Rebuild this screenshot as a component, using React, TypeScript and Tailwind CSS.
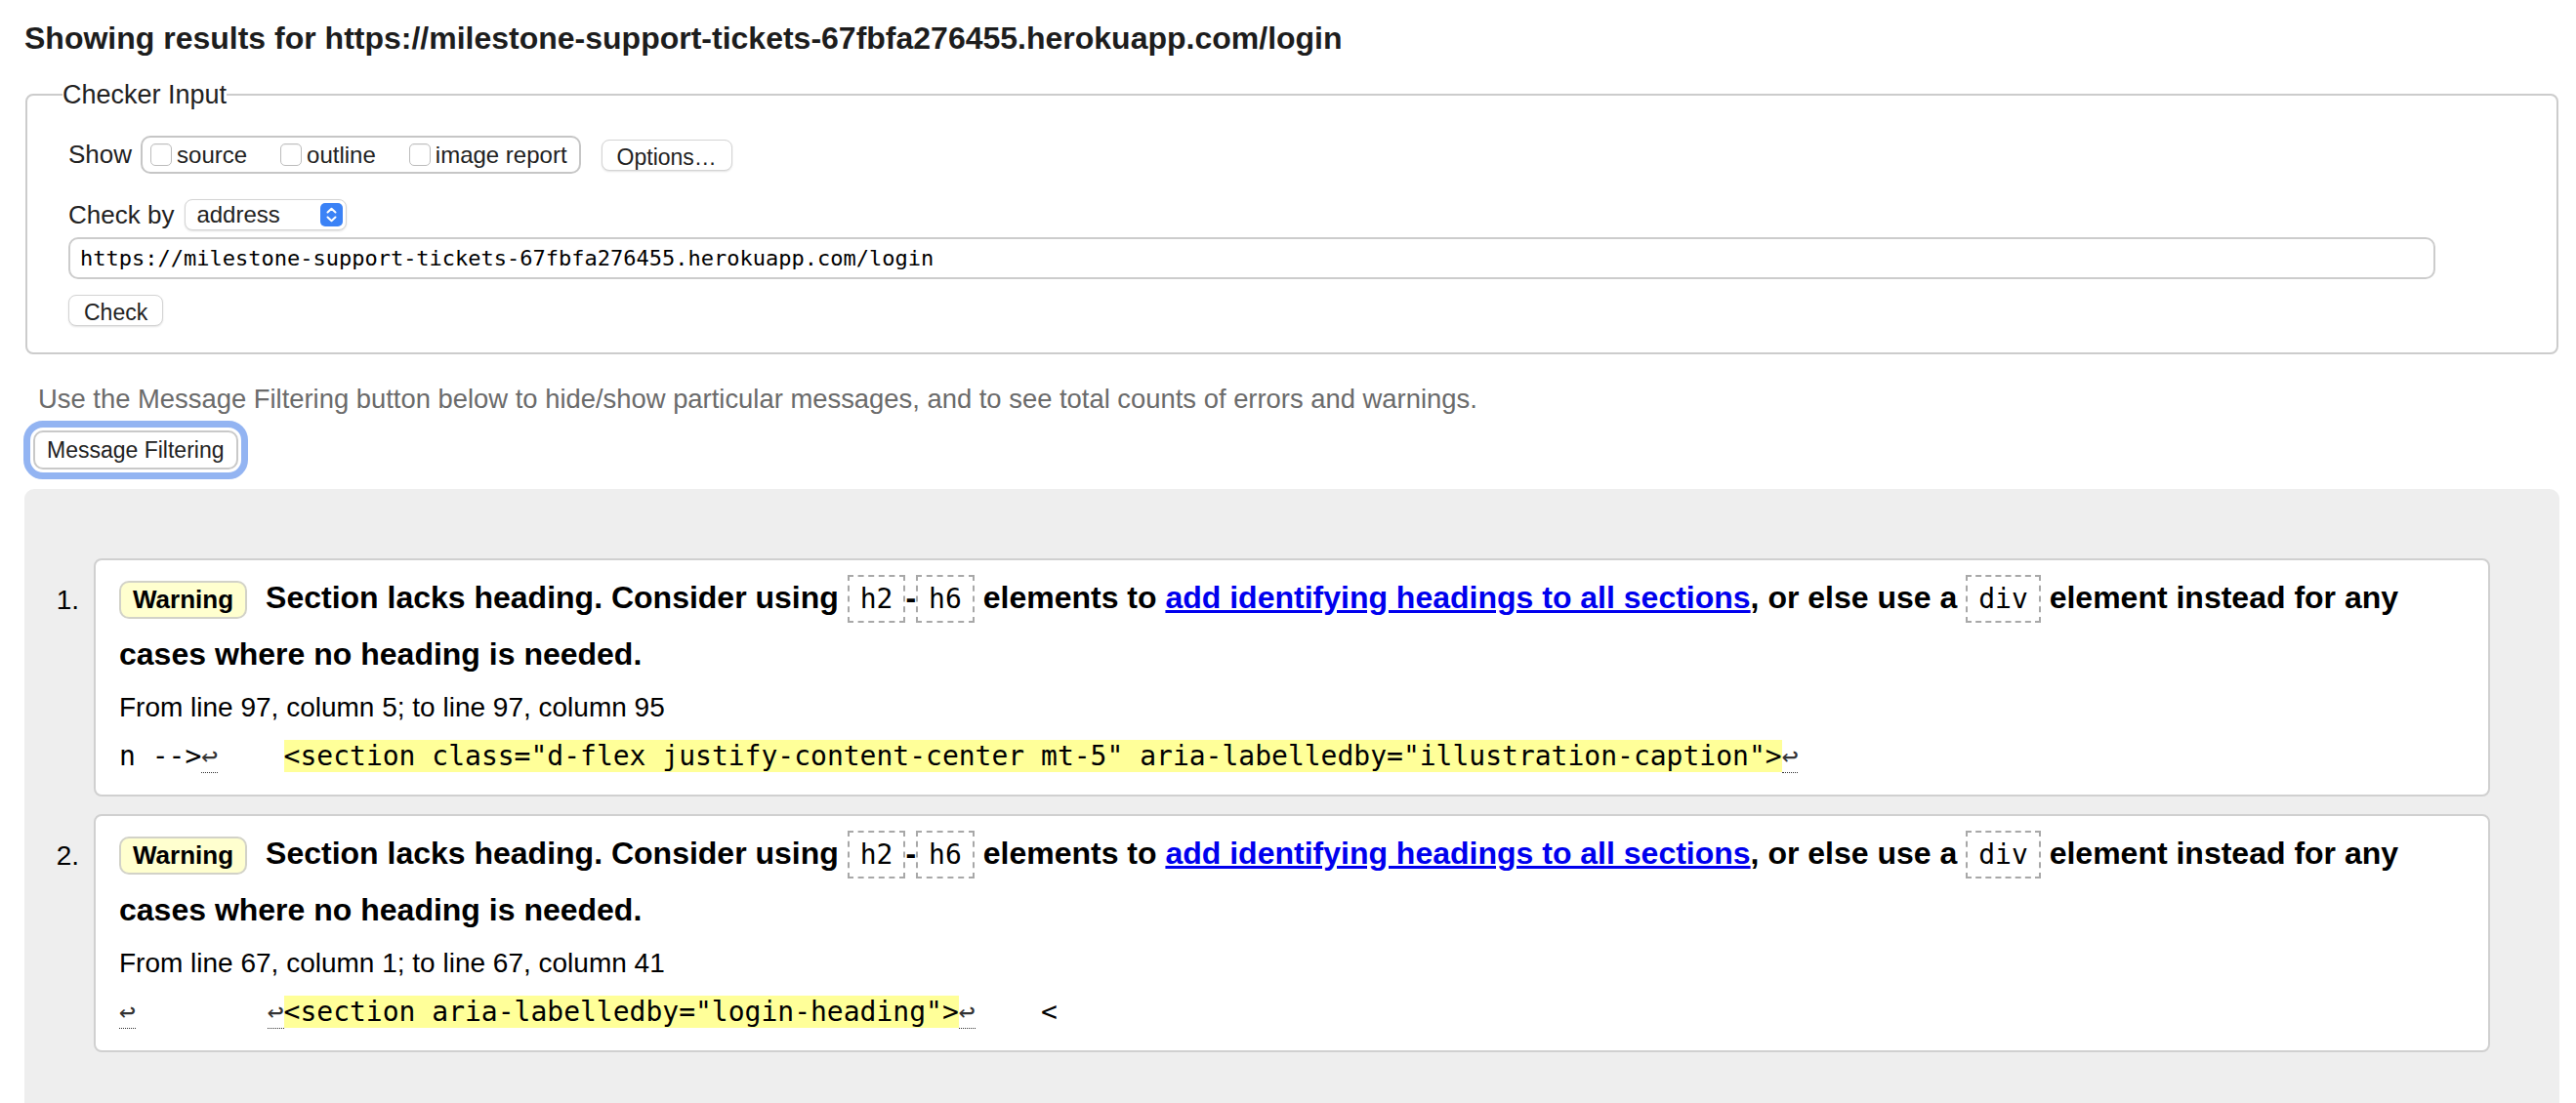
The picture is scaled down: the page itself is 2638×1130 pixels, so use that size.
import React from "react";

type Msg = {
    n: number;
    from: string;
    extract: React.ReactNode;
};

function Nl() {
    return <span className="border-b border-dotted border-[#333] text-[#333]">↩</span>;
}

function Code({ children }: { children: React.ReactNode }) {
    return (
        <code className="border-2 border-dashed border-[#a8a8a8] px-[11px] py-[6px] font-['DejaVu_Sans_Mono',monospace] text-[28px] font-normal">
            {children}
        </code>
    );
}

function Hl({ children }: { children: React.ReactNode }) {
    return <span className="bg-[#ffff99]">{children}</span>;
}

const messages: Msg[] = [
    {
        n: 1,
        from: "From line 97, column 5; to line 97, column 95",
        extract: (
            <>
                {"n -->"}
                <Nl />
                {"    "}
                <Hl>{'<section class="d-flex justify-content-center mt-5" aria-labelledby="illustration-caption">'}</Hl>
                <Nl />
            </>
        ),
    },
    {
        n: 2,
        from: "From line 67, column 1; to line 67, column 41",
        extract: (
            <>
                <Nl />
                {"        "}
                <Nl />
                <Hl>{'<section aria-labelledby="login-heading">'}</Hl>
                <Nl />
                {"    <"}
            </>
        ),
    },
];

function Checkbox({ label }: { label: string }) {
    return (
        <label className="flex items-center gap-[5px] text-[24px] text-[#222]">
            <span className="h-[23px] w-[22px] rounded-[5px] border border-[#bdbdbd] bg-white shadow-[inset_0_1px_1px_rgba(0,0,0,0.05)]" />
            {label}
        </label>
    );
}

function CheckerInput() {
    return (
        <fieldset className="mx-[1px] mt-[24px] rounded-[8px] border-2 border-[#cccccc] pl-[36px] pr-[124px] pt-[27px] pb-[27px]">
            <legend className="text-[27px] leading-[30px] text-[#222]">Checker Input</legend>
            <div className="ml-[6px]">
                <div className="flex h-[39px] items-center">
                    <span className="text-[26px] text-[#222]">Show</span>
                    <div className="ml-[9px] flex h-[39px] items-center gap-[34px] rounded-[10px] border-2 border-[#c6c6c6] pl-[8px] pr-[12px]">
                        <Checkbox label="source" />
                        <Checkbox label="outline" />
                        <Checkbox label="image report" />
                    </div>
                    <button className="ml-[21px] h-[32px] rounded-[8px] border border-[#d4d4d4] bg-white px-[15px] text-[23px] text-[#222] shadow-[0_1px_2px_rgba(0,0,0,0.12)]">
                        Options…
                    </button>
                </div>

                <div className="mt-[26px] flex h-[32px] items-center">
                    <span className="text-[26px] text-[#222]">Check by</span>
                    <div className="ml-[11px] flex h-[32px] w-[166px] items-center justify-between rounded-[8px] border border-[#d4d4d4] bg-white pl-[11px] pr-[3px] shadow-[0_1px_2px_rgba(0,0,0,0.12)]">
                        <span className="text-[24px] text-[#222]">address</span>
                        <svg width="23" height="24" viewBox="0 0 23 24">
                            <rect width="23" height="24" rx="5" fill="#3b82f6" />
                            <path d="M7.5 9.5 L11.5 5.8 L15.5 9.5" stroke="#fff" strokeWidth="2" fill="none" strokeLinecap="round" strokeLinejoin="round" />
                            <path d="M7.5 14.5 L11.5 18.2 L15.5 14.5" stroke="#fff" strokeWidth="2" fill="none" strokeLinecap="round" strokeLinejoin="round" />
                        </svg>
                    </div>
                </div>

                <input
                    readOnly
                    value="https://milestone-support-tickets-67fbfa276455.herokuapp.com/login"
                    className="mt-[7px] block h-[43px] w-full rounded-[10px] border-2 border-[#cccccc] bg-white px-[10px] font-['DejaVu_Sans_Mono',monospace] text-[22px] text-black outline-none"
                />

                <button className="mt-[16px] block h-[32px] rounded-[8px] border border-[#d4d4d4] bg-white px-[15px] text-[23px] text-[#222] shadow-[0_1px_2px_rgba(0,0,0,0.12)]">
                    Check
                </button>
            </div>
        </fieldset>
    );
}

function MessageCard({ m }: { m: Msg }) {
    return (
        <li className="flex">
            <div className="w-[39px] shrink-0 pr-[15px] pt-[15px] text-right text-[28px] leading-[56px] text-black">
                {m.n}.
            </div>
            <div className="min-w-0 flex-1 rounded-[8px] border-2 border-[#d0d0d0] bg-white px-[24px] pt-[10px] pb-[19px] text-black">
                <p className="text-[32px] font-bold leading-[56px]">
                    <span className="mr-[19px] inline-block rounded-[10px] border-2 border-[#d2d2c8] bg-[#ffffcf] px-[12px] text-[26px] leading-[35px]">
                        Warning
                    </span>
                    Section lacks heading. Consider using <Code>h2</Code>-<Code>h6</Code> elements to{" "}
                    <a href="#" className="text-[#0000ee] underline">
                        add identifying headings to all sections
                    </a>
                    , or else use a <Code>div</Code> element instead for any cases where no heading is needed.
                </p>
                <p className="mt-[7px] text-[28px] leading-[40px]">{m.from}</p>
                <p className="mt-[10px] whitespace-pre font-['DejaVu_Sans_Mono',monospace] text-[28px] leading-[40px]">
                    {m.extract}
                </p>
            </div>
        </li>
    );
}

export default function App() {
    return (
        <div className="min-h-screen bg-white pl-[25px] pr-[17px] font-['Liberation_Sans',Arial,sans-serif] text-[#222]">
            <h2 className="pt-[21px] text-[32px] font-bold leading-[37px] text-[#1d1d1d]">
                Showing results for https://milestone-support-tickets-67fbfa276455.herokuapp.com/login
            </h2>

            <CheckerInput />

            <p className="mt-[30px] ml-[14px] text-[27.4px] leading-[32px] text-[#6b6b6b]">
                Use the Message Filtering button below to hide/show particular messages, and to see total counts of errors and warnings.
            </p>

            <button className="ml-[9px] mt-[16px] block h-[40px] rounded-[10px] border-2 border-[#c9c9c9] bg-white px-[12px] text-[23px] text-[#222] outline-solid outline-[7px] outline-offset-[3px] outline-[#93b4f2]">
                Message Filtering
            </button>

            <div className="mt-[20px] rounded-t-[10px] bg-[#eeeeee] pt-[71px] pb-[71px] pl-[32px] pr-[71px]">
                <ol className="flex flex-col gap-[18px]">
                    {messages.map((m) => (
                        <MessageCard key={m.n} m={m} />
                    ))}
                </ol>
            </div>
        </div>
    );
}
